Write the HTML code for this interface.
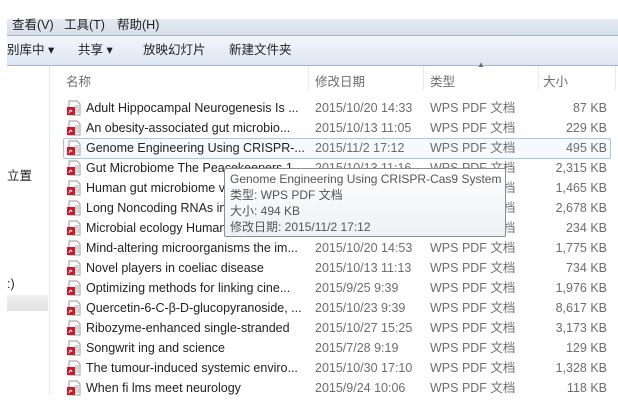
<!DOCTYPE html>
<html><head><meta charset="utf-8"><style>
*{margin:0;padding:0;box-sizing:border-box}
body{width:618px;height:405px;background:#fff;position:relative;overflow:hidden;font-family:"Liberation Sans","Noto Sans CJK SC",sans-serif;color:#222;font-size:12.5px}
.a{position:absolute;white-space:nowrap}
.menu{left:7px;top:19px;width:611px;height:17px;background:linear-gradient(#e4e9f1,#d8e0eb);border-bottom:1px solid #a9b5c6}
.tool{left:7px;top:36px;width:611px;height:30px;background:linear-gradient(#f2f6fb,#dde6f2);border-bottom:1px solid #a9b5c6}
.g{color:#6d6d6d}
.sep{top:66px;width:1px;height:24px;background:#e6e9ee}
.icon{position:absolute;left:66px;width:16px;height:16px}
.row{position:absolute;left:86px;height:20px;line-height:20px}
.d{position:absolute;left:315px;color:#6d6d6d}
.t{position:absolute;left:430px;color:#6d6d6d}
.s{position:absolute;right:11px;color:#6d6d6d;text-align:right}
</style></head><body>
<div class="a menu"></div>
<div class="a" style="left:12px;top:16px;font-size:12.5px;line-height:18px">查看(V)</div>
<div class="a" style="left:64px;top:16px;line-height:18px">工具(T)</div>
<div class="a" style="left:117px;top:16px;line-height:18px">帮助(H)</div>
<div class="a tool"></div>
<div class="a" style="left:7px;top:41px;line-height:18px">别库中 ▾</div>
<div class="a" style="left:78px;top:41px;line-height:18px">共享 ▾</div>
<div class="a" style="left:143px;top:41px;line-height:18px">放映幻灯片</div>
<div class="a" style="left:229px;top:41px;line-height:18px">新建文件夹</div>
<div class="a" style="left:49px;top:66px;width:1px;height:329px;background:#e3e6ea"></div>
<div class="a" style="left:7px;top:165px">立置</div>
<div class="a" style="left:7px;top:277px">:)</div>
<div class="a" style="left:7px;top:295px;width:41px;height:16px;background:linear-gradient(#f0f0f0,#e2e2e2)"></div>
<div class="a g" style="left:66px;top:71px">名称</div>
<div class="a g" style="left:315px;top:71px">修改日期</div>
<div class="a g" style="left:430px;top:71px">类型</div>
<div class="a g" style="left:543px;top:71px">大小</div>
<div class="a g" style="left:477px;top:60px;font-size:8px">▲</div>
<div class="a sep" style="left:308px"></div>
<div class="a sep" style="left:423px"></div>
<div class="a sep" style="left:538px"></div>
<div class="a sep" style="left:615px"></div>
<div class="a" style="left:63px;top:138px;width:548px;height:21px;border:1px solid #a9c4e4;border-radius:2px;background:#f6f9fd"></div>
<div id="rows"></div>
<script>
var R=[["Adult Hippocampal Neurogenesis Is ...","2015/10/20 14:33","87 KB"],
["An obesity-associated gut microbio...","2015/10/13 11:05","229 KB"],
["Genome Engineering Using CRISPR-...","2015/11/2 17:12","495 KB"],
["Gut Microbiome The Peacekeepers 1","2015/10/13 11:16","2,315 KB"],
["Human gut microbiome viewed","2015/10/13 11:16","1,465 KB"],
["Long Noncoding RNAs in","2015/10/13 11:16","2,678 KB"],
["Microbial ecology Human","2015/10/13 11:16","234 KB"],
["Mind-altering microorganisms the im...","2015/10/20 14:53","1,775 KB"],
["Novel players in coeliac disease","2015/10/13 11:13","734 KB"],
["Optimizing methods for linking cine...","2015/9/25 9:39","1,976 KB"],
["Quercetin-6-C-β-D-glucopyranoside, ...","2015/10/23 9:39","8,617 KB"],
["Ribozyme-enhanced single-stranded","2015/10/27 15:25","3,173 KB"],
["Songwrit ing and science","2015/7/28 9:19","129 KB"],
["The tumour-induced systemic enviro...","2015/10/30 17:10","1,328 KB"],
["When fi lms meet neurology","2015/9/24 10:06","118 KB"]];
var h="";
for(var i=0;i<R.length;i++){var y=98+i*20;
h+='<svg class="icon" style="top:'+(y+2)+'px" viewBox="0 0 16 16"><path d="M3 1h8l3 3v11H3z" fill="#fff" stroke="#9a9a9a"/><path d="M9 6h4M9 8h4M9 10h4M9 12h4" stroke="#aaa"/><rect x="1" y="7" width="8" height="8" fill="#c8192b"/><path d="M3 13c1-3 2-4 3-1" stroke="#fff" fill="none"/></svg>';
h+='<div class="row" style="top:'+y+'px">'+R[i][0]+'</div>';
h+='<div class="row d" style="top:'+y+'px">'+R[i][1]+'</div>';
h+='<div class="row t" style="top:'+y+'px">WPS PDF 文档</div>';
h+='<div class="row s" style="top:'+y+'px;left:auto">'+R[i][2]+'</div>';}
document.getElementById("rows").innerHTML=h;
</script>
<div class="a" style="left:224px;top:168px;width:282px;height:69px;background:linear-gradient(#fff,#eef0f4);border:1px solid #8a8f96;border-radius:2px;color:#555;font-size:12px;line-height:16px;padding:2px 0 0 5px">
Genome Engineering Using CRISPR-Cas9 System<br>类型: WPS PDF 文档<br>大小: 494 KB<br>修改日期: 2015/11/2 17:12</div>
</body></html>
